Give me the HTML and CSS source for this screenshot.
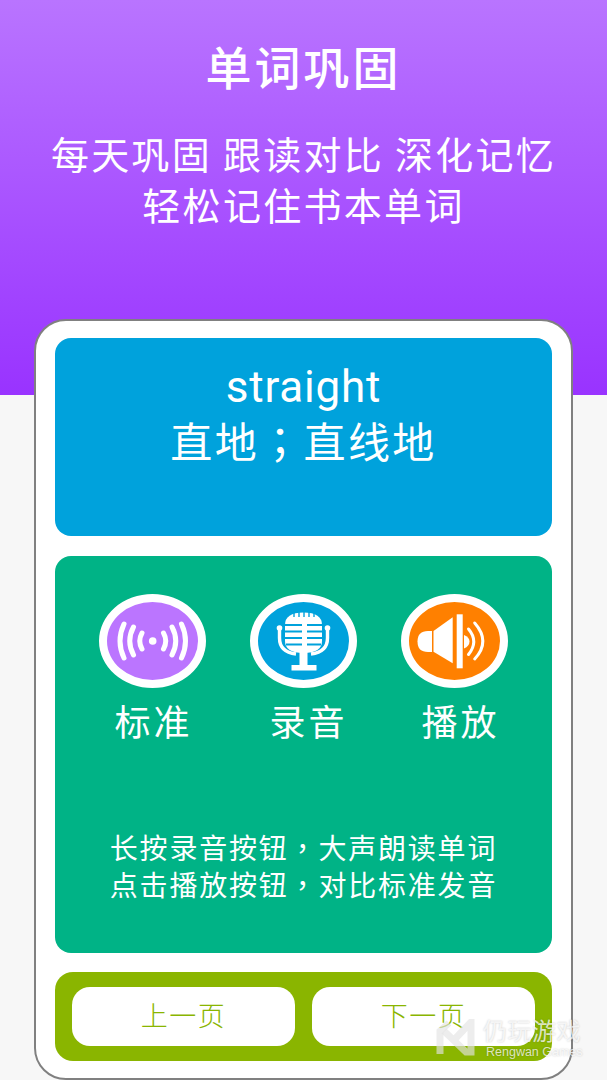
FILE: index.html
```html
<!DOCTYPE html>
<html>
<head>
    <title>单词巩固</title>
    <link rel="stylesheet" href="styles.css">
</head>
<body>
    <div class="header">
        <h1>单词巩固</h1>
        <p>每天巩固 跟读对比 深化记忆<br>轻松记住书本单词</p>
    </div>

    <div class="phone">
        <div class="word-card">
            <div class="word">straight</div>
            <div class="meaning">直地<span class="punct">；</span>直线地</div>
        </div>

        <div class="practice-card">
            <div class="actions">
                <div class="action">
                    <div class="icon icon-standard">
                        <svg width="107" height="94" viewBox="0 0 107 94">
                            <circle cx="53.7" cy="47" r="3.8" fill="#fff"/>
                            <g fill="none" stroke="#fff" stroke-width="5" stroke-linecap="round">
                                <path d="M43 39 Q38.500 47 43 55"/>
                                <path d="M64.500 39 Q69 47 64.500 55"/>
                                <path d="M34.500 33 Q27 47 34.500 61"/>
                                <path d="M73 33 Q80.500 47 73 61"/>
                                <path d="M25 30 Q17 47 25 64"/>
                                <path d="M82.500 30 Q90.500 47 82.500 64"/>
                            </g>
                        </svg>
                    </div>
                    <span class="action-label">标准</span>
                </div>
                <div class="action action-mid">
                    <div class="icon icon-record">
                        <svg width="107" height="94" viewBox="0 0 107 94">
                            <path d="M35 31 Q35 18.500 53.500 18.500 Q72 18.500 72 31 L72 47 Q72 59 53.500 59 Q35 59 35 47 Z" fill="#fff"/>
                            <g stroke="#00a2dc" stroke-width="2">
                                <path d="M35 31 H52 M57 31 H72"/>
                                <path d="M35 37.500 H52 M57 37.500 H72"/>
                                <path d="M35 44 H52 M57 44 H72"/>
                                <path d="M36 50.500 H52 M57 50.500 H71"/>
                            </g>
                            <path d="M44 18 V23 M49 18 V23 M54 18 V23 M59 18 V23 M64 18 V23" stroke="#00a2dc" stroke-width="1.400"/>
                            <g fill="none" stroke="#fff" stroke-width="3.400">
                                <path d="M29.500 33 V44 Q29.500 58 46 60"/>
                                <path d="M77.500 33 V44 Q77.500 58 61 60"/>
                            </g>
                            <circle cx="29.500" cy="34" r="2.800" fill="#fff"/>
                            <circle cx="77.500" cy="34" r="2.800" fill="#fff"/>
                            <rect x="49.500" y="58" width="8" height="14" fill="#fff"/>
                            <rect x="41.500" y="71" width="25" height="5.500" fill="#fff"/>
                        </svg>
                    </div>
                    <span class="action-label">录音</span>
                </div>
                <div class="action action-last">
                    <div class="icon icon-play">
                        <svg width="107" height="94" viewBox="0 0 107 94">
                            <path d="M31 37 V58 H27 Q16.500 58 16.500 47.500 Q16.500 37 27 37 Z" fill="#fff"/>
                            <path d="M32.500 37 L51.700 23.300 V69.300 L32.500 57.700 Z" fill="#fff"/>
                            <rect x="55.700" y="20.300" width="6" height="54" fill="#fff"/>
                            <path d="M63 41 Q68.500 43 68.500 47.500 Q68.500 52 63 54.500 Z" fill="#fff"/>
                            <g fill="none" stroke="#fff" stroke-width="3" stroke-linecap="round">
                                <path d="M67.500 35 Q78 47.500 67.500 60.500"/>
                                <path d="M73.700 29 Q90 47.500 73.700 65"/>
                            </g>
                        </svg>
                    </div>
                    <span class="action-label">播放</span>
                </div>
            </div>
            <p class="tips">长按录音按钮<span class="punct">，</span>大声朗读单词<br>点击播放按钮<span class="punct">，</span>对比标准发音</p>
        </div>

        <div class="pager">
            <button type="button">上一页</button>
            <button type="button">下一页</button>
        </div>
    </div>

    <!-- watermark sits over the bottom right corner -->
    <div class="watermark">
        <svg class="watermark-logo" width="42" height="40" viewBox="0 0 42 40">
            <g fill="none" stroke="#e4e4e4" stroke-opacity="0.65" stroke-width="7">
                <path d="M4 35 V12 L13 4"/>
                <path d="M8 12 L30 33 H35 V3 L18 21"/>
            </g>
        </svg>
        <div class="watermark-text">
            <div class="watermark-cn">仍玩游戏</div>
            <div class="watermark-en">Rengwan Games</div>
        </div>
    </div>
</body>
</html>
```

FILE: styles.css
```css
/* Set body font and background color */
body {
    margin: 0;
    height: 1080px;
    overflow: hidden;
    position: relative;
    background-color: #f7f7f7;
    font-family: "Noto Sans CJK SC", Roboto, sans-serif;
    color: #fff;
}

/* Set header styles */
.header {
    height: 395px;
    box-sizing: border-box;
    padding-top: 36px;
    background: linear-gradient(#b974ff, #9933ff);
    text-align: center;
}

    .header h1 {
        margin: 0;
        font-size: 46px;
        line-height: 58px;
        letter-spacing: 3px;
        font-weight: 500;
    }

    .header p {
        margin: 33px 0 0;
        font-size: 38px;
        line-height: 51px;
        letter-spacing: 2.300px;
        font-weight: 400;
    }

/* Centered punctuation, the SC glyphs sit low on the left */
.punct {
    font-family: "Noto Sans CJK TC", sans-serif;
}

/* Set phone frame styles */
.phone {
    box-sizing: border-box;
    width: 539px;
    height: 761px;
    margin: -76px 0 0 34px;
    padding: 17px 19px 0;
    background-color: #fff;
    border: 2px solid #808080;
    border-radius: 32px;
    position: relative;
}

/* Set word card styles */
.word-card {
    height: 198px;
    box-sizing: border-box;
    padding-top: 24px;
    background-color: #00a2dc;
    border-radius: 16px;
    text-align: center;
}

.word {
    font-family: Roboto, sans-serif;
    font-size: 44px;
    line-height: 50px;
    letter-spacing: 0.800px;
}

.meaning {
    font-size: 42px;
    line-height: 56px;
    letter-spacing: 2.400px;
    font-weight: 400;
}

/* Set practice card styles */
.practice-card {
    height: 397px;
    box-sizing: border-box;
    margin-top: 20px;
    padding: 38px 0 0 44px;
    background-color: #00b386;
    border-radius: 16px;
}

.actions {
    display: flex;
}

.action {
    width: 107px;
    margin-right: 44px;
    text-align: center;
}

.action-label {
    display: block;
    margin-top: 7px;
    font-size: 36px;
    line-height: 50px;
    letter-spacing: 3px;
    font-weight: 400;
    white-space: nowrap;
}

.action:first-child .action-label {
    margin-left: 1px;
    margin-right: -1px;
}

.action-mid .action-label {
    margin-left: 5px;
    margin-right: -5px;
}

.action-last .action-label {
    margin-left: 6px;
    margin-right: -6px;
}

.icon {
    box-sizing: border-box;
    width: 107px;
    height: 94px;
    border-radius: 50%;
    border: 8px solid #fff;
}

    .icon svg {
        display: block;
        margin: -8px;
    }

.icon-standard {
    background-color: #bb75ff;
}

.icon-record {
    background-color: #00a2dc;
}

.icon-play {
    background-color: #ff8000;
}

.tips {
    margin: 84px 0 0 -44px;
    font-size: 28px;
    line-height: 37px;
    letter-spacing: 1.800px;
    font-weight: 400;
    text-align: center;
}

/* Set pager styles */
.pager {
    display: flex;
    gap: 17px;
    height: 89px;
    box-sizing: border-box;
    margin-top: 19px;
    padding: 15px 17px;
    background-color: #8ab500;
    border-radius: 18px;
}

    .pager button {
        width: 223px;
        height: 59px;
        padding: 0 0 4px;
        border: none;
        border-radius: 18px;
        background-color: #fff;
        color: #8ab500;
        font-family: inherit;
        font-size: 27px;
        letter-spacing: 1.500px;
        font-weight: 300;
    }

/* Set watermark styles */
.watermark {
    position: absolute;
    left: 436px;
    top: 1017px;
    display: flex;
    gap: 5px;
}

.watermark-logo {
    margin-top: 2px;
}

.watermark-text {
    color: rgba(255, 255, 255, 0.75);
    text-shadow: 0 0 2px rgba(0, 0, 0, 0.22);
}

.watermark-cn {
    font-size: 24px;
    line-height: 26px;
    letter-spacing: 0.500px;
    white-space: nowrap;
}

.watermark-en {
    font-family: "Liberation Sans", sans-serif;
    font-size: 12.500px;
    line-height: 14px;
    margin-top: 2px;
    margin-left: 3px;
    white-space: nowrap;
}
```
